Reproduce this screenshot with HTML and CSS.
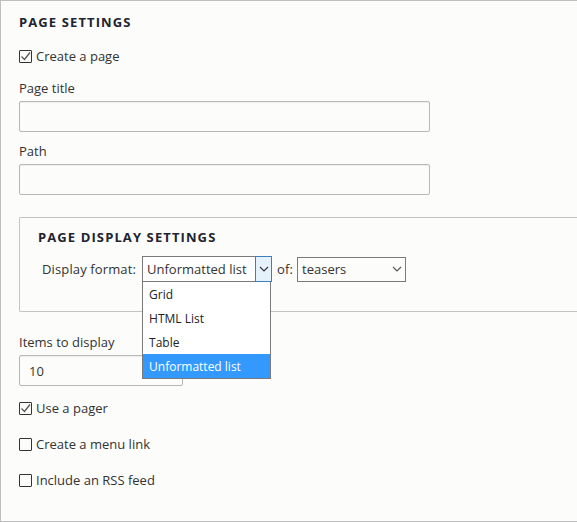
FILE: index.html
```html
<!DOCTYPE html>
<html>
<head>
<meta charset="utf-8">
<link rel="stylesheet" href="styles.css">
</head>
<body>
<div class="panel">
  <h2 class="legend">Page settings</h2>
  <label class="check c0"><span class="box checked"><svg viewBox="0 0 13 13" width="13" height="13"><path d="M2.5 6.5 L5.5 9.5 L11 2.5" fill="none" stroke="#555" stroke-width="1.3"/></svg></span>Create a page</label>
  <div class="field first">
    <div class="label">Page title</div>
    <div class="input wide"></div>
  </div>
  <div class="field">
    <div class="label">Path</div>
    <div class="input wide"></div>
  </div>
  <div class="inner">
    <h2 class="legend inner-legend">Page display settings</h2>
    <div class="row">
      <span class="rowlabel">Display format:</span>
      <div class="selectwrap">
        <div class="select focus"><span class="value">Unformatted list</span><span class="arrow open"><svg viewBox="0 0 10 6" width="10" height="6"><path d="M1 1 L5 5 L9 1" fill="none" stroke="#333" stroke-width="1.1"/></svg></span></div>
        <ul class="menu">
          <li>Grid</li>
          <li>HTML List</li>
          <li>Table</li>
          <li class="sel">Unformatted list</li>
        </ul>
      </div>
      <span class="rowlabel of">of:</span>
      <div class="select small"><span class="value">teasers</span><span class="arrow"><svg viewBox="0 0 10 6" width="10" height="6"><path d="M1 1 L5 5 L9 1" fill="none" stroke="#555" stroke-width="1.1"/></svg></span></div>
    </div>
  </div>
  <div class="field items">
    <div class="label">Items to display</div>
    <div class="input narrow"><span class="val">10</span></div>
  </div>
  <label class="check c1"><span class="box checked"><svg viewBox="0 0 13 13" width="13" height="13"><path d="M2.5 6.5 L5.5 9.5 L11 2.5" fill="none" stroke="#555" stroke-width="1.3"/></svg></span>Use a pager</label>
  <label class="check c2"><span class="box"></span>Create a menu link</label>
  <label class="check c2"><span class="box"></span>Include an RSS feed</label>
</div>
</body>
</html>
```
FILE: styles.css
```css
html, body {
  margin: 0;
  padding: 0;
  background: #fcfcfa;
}
body {
  font-family: "Open Sans", "Noto Sans", sans-serif;
  font-size: 13px;
  color: #333;
  width: 577px;
  height: 522px;
  overflow: hidden;
}
.panel {
  box-sizing: border-box;
  height: 522px;
  border: 1px solid #bfbfbf;
  border-right: none;
  padding: 12px 0 0 18px;
  display: flex;
  flex-direction: column;
}
.legend {
  margin: 0;
  font-size: 13px;
  font-weight: bold;
  text-transform: uppercase;
  letter-spacing: 0.085em;
  color: #222330;
  line-height: 18px;
}
.check {
  display: flex;
  align-items: center;
  gap: 4px;
  line-height: 18px;
}
.c0 { margin-top: 16px; }
.box {
  box-sizing: border-box;
  width: 13px;
  height: 13px;
  border: 1px solid #333;
  border-radius: 1px;
  display: inline-flex;
  position: relative;
  background: #fcfcfa;
}
.box svg {
  position: absolute;
  left: -1px;
  top: -1px;
}
.field {
  margin-top: 10px;
}
.field.first { margin-top: 14px; }
.label {
  line-height: 18px;
  margin-bottom: 4px;
}
.input {
  box-sizing: border-box;
  height: 31px;
  border: 1px solid #b8b8b8;
  border-radius: 2px;
  background: #fcfcfa;
  box-shadow: inset 0 1px 1px rgba(0,0,0,0.06);
}
.wide { width: 411px; }
.narrow {
  width: 164px;
  display: flex;
  align-items: center;
  padding-left: 9px;
}
.inner {
  margin-top: 22px;
  box-sizing: border-box;
  height: 95px;
  border: 1px solid #c4c4c4;
  border-right: none;
  border-radius: 2px 0 0 2px;
  padding: 10px 0 0 18px;
}
.row {
  display: flex;
  align-items: center;
  margin-top: 10px;
  padding-left: 4px;
}
.rowlabel {
  margin-right: 6px;
  letter-spacing: 0.01em;
}
.of {
  margin-left: 5px;
  margin-right: 4px;
}
.selectwrap {
  position: relative;
}
.select {
  box-sizing: border-box;
  height: 26px;
  border: 1px solid #7a7a7a;
  display: flex;
  align-items: center;
  background: #fff;
}
.select.small { height: 25px; }
.select.focus { width: 130px; }
.select.small { width: 109px; background: #fcfcfa; }
.value {
  flex: 1;
  padding-left: 4px;
  white-space: nowrap;
}
.arrow {
  width: 16px;
  height: 100%;
  display: flex;
  align-items: center;
  justify-content: center;
}
.arrow.open {
  box-sizing: border-box;
  height: 26px;
  width: 17px;
  margin: -1px -1px -1px 0;
  border: 1px solid #3c7fc1;
  background: #e5f1fb;
}
.menu {
  position: absolute;
  left: 0;
  top: 26px;
  width: 129px;
  box-sizing: border-box;
  margin: 0;
  padding: 0;
  list-style: none;
  border: 1px solid #7a7a7a;
  border-top: none;
  background: #fff;
  font-size: 12px;
}
.menu li {
  height: 24px;
  line-height: 26px;
  padding-left: 6px;
  color: #222;
}
.menu li.sel {
  background: #3399ff;
  color: #fff;
}
.items { margin-top: 21px; }
.c1 { margin-top: 13px; }
.c2 { margin-top: 18px; }
```
